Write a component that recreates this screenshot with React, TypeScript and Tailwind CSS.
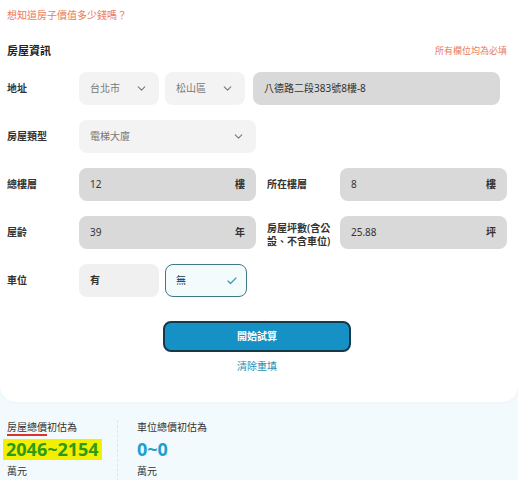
import { ChevronDown, Check } from "lucide-react";

const font = { fontFamily: '"Noto Sans", "Noto Sans CJK TC", sans-serif' };

function Label({ children }: { children: React.ReactNode }) {
  return <div className="w-[72px] shrink-0 text-[10px] font-semibold leading-[13px] text-[#333]">{children}</div>;
}

function Select({ value, className }: { value: string; className: string }) {
  return (
    <div className={`flex h-full items-center justify-between rounded-[8px] bg-[#f3f3f3] pl-[11px] pr-[11px] text-[10px] text-[#777] ${className}`}>
      <span>{value}</span>
      <ChevronDown className="h-[13px] w-[13px] text-[#777]" strokeWidth={2} />
    </div>
  );
}

function Field({ value, unit, className }: { value: string; unit?: string; className: string }) {
  return (
    <div className={`flex h-full items-center justify-between rounded-[8px] bg-[#d9d9d9] pl-[11px] pr-[11px] text-[10px] text-[#333] ${className}`}>
      <span>{value}</span>
      {unit && <span className="font-bold text-[#333]">{unit}</span>}
    </div>
  );
}

export default function App() {
  return (
    <div className="min-h-[480px] w-full bg-[#f3fafd]" style={font}>
      <div className="rounded-b-2xl bg-white pb-[29px] pl-[7px] pr-[11px] pt-[8px] shadow-[0_1px_3px_rgba(0,0,0,0.03)]">
        <p className="text-[10px] leading-[14px] text-[#ec7a5a]">想知道房子價值多少錢嗎？</p>

        <div className="mt-[21px] flex h-[16px] items-center justify-between">
          <h2 className="text-[11px] font-bold text-[#222]">房屋資訊</h2>
          <span className="text-[9px] text-[#ec7a5a]">所有欄位均為必填</span>
        </div>

        <div className="mt-[13px] flex flex-col gap-[15px]">
          <div className="flex h-[33px] items-center">
            <Label>地址</Label>
            <div className="flex h-full flex-1 gap-[6px]">
              <Select value="台北市" className="w-[80px]" />
              <Select value="松山區" className="w-[80px]" />
              <Field value="八德路二段383號8樓-8" className="ml-[2px] w-[247px]" />
            </div>
          </div>

          <div className="flex h-[33px] items-center">
            <Label>房屋類型</Label>
            <Select value="電梯大廈" className="w-[177px]" />
          </div>

          <div className="flex h-[33px] items-center">
            <Label>總樓層</Label>
            <Field value="12" unit="樓" className="w-[177px]" />
            <div className="ml-[11px] w-[73px] shrink-0 text-[10px] font-semibold leading-[13px] text-[#333]">所在樓層</div>
            <Field value="8" unit="樓" className="flex-1" />
          </div>

          <div className="flex h-[33px] items-center">
            <Label>屋齡</Label>
            <Field value="39" unit="年" className="w-[177px]" />
            <div className="ml-[11px] w-[73px] shrink-0 pt-[4px] text-[10px] font-semibold leading-[13px] text-[#333]">
              房屋坪數(含公
              <br />
              設、不含車位)
            </div>
            <Field value="25.88" unit="坪" className="flex-1" />
          </div>

          <div className="flex h-[33px] items-center">
            <Label>車位</Label>
            <div className="flex h-full gap-[6px]">
              <div className="flex w-[80px] items-center rounded-[8px] bg-[#f0f0f0] pl-[11px] text-[10px] font-semibold text-[#333]">有</div>
              <div className="flex w-[82px] items-center justify-between rounded-[8px] border border-[#3d7a84] bg-[#f3fbfc] pl-[10px] pr-[8px] text-[10px] text-[#333]">
                <span>無</span>
                <Check className="h-[12px] w-[12px] text-[#3aa0b5]" strokeWidth={2.5} />
              </div>
            </div>
          </div>
        </div>

        <div className="mt-[24px] flex flex-col items-center">
          <button className="flex h-[31px] w-[188px] items-center justify-center rounded-[8px] border-2 border-[#16394a] bg-[#1591c5] text-[10px] font-bold text-white">
            開始試算
          </button>
          <span className="mt-[7px] text-[10px] leading-[14px] text-[#1f8fb6]">清除重填</span>
        </div>
      </div>

      <div className="flex pl-[7px] pt-[18px]">
        <div className="w-[110px] pb-[8px]">
          <p className="text-[10px] leading-[14px] text-[#333]">
            <span className="border-b-2 border-[#d9342b]">房屋總價</span>初估為
          </p>
          <div className="mt-[5px] flex">
            <span className="-ml-[4px] bg-[#f2ef00] px-[3px] text-[18px] font-bold leading-[21px] text-[#2c9a1a]">2046~2154</span>
          </div>
          <p className="mt-[4px] text-[10px] leading-[14px] text-[#333]">萬元</p>
        </div>
        <div className="border-l border-dashed border-[#dfe6ea] pl-[19px]">
          <p className="text-[10px] leading-[14px] text-[#333]">車位總價初估為</p>
          <p className="mt-[5px] text-[18px] font-bold leading-[21px] text-[#1c9fd0]">0~0</p>
          <p className="mt-[4px] text-[10px] leading-[14px] text-[#333]">萬元</p>
        </div>
      </div>
    </div>
  );
}
